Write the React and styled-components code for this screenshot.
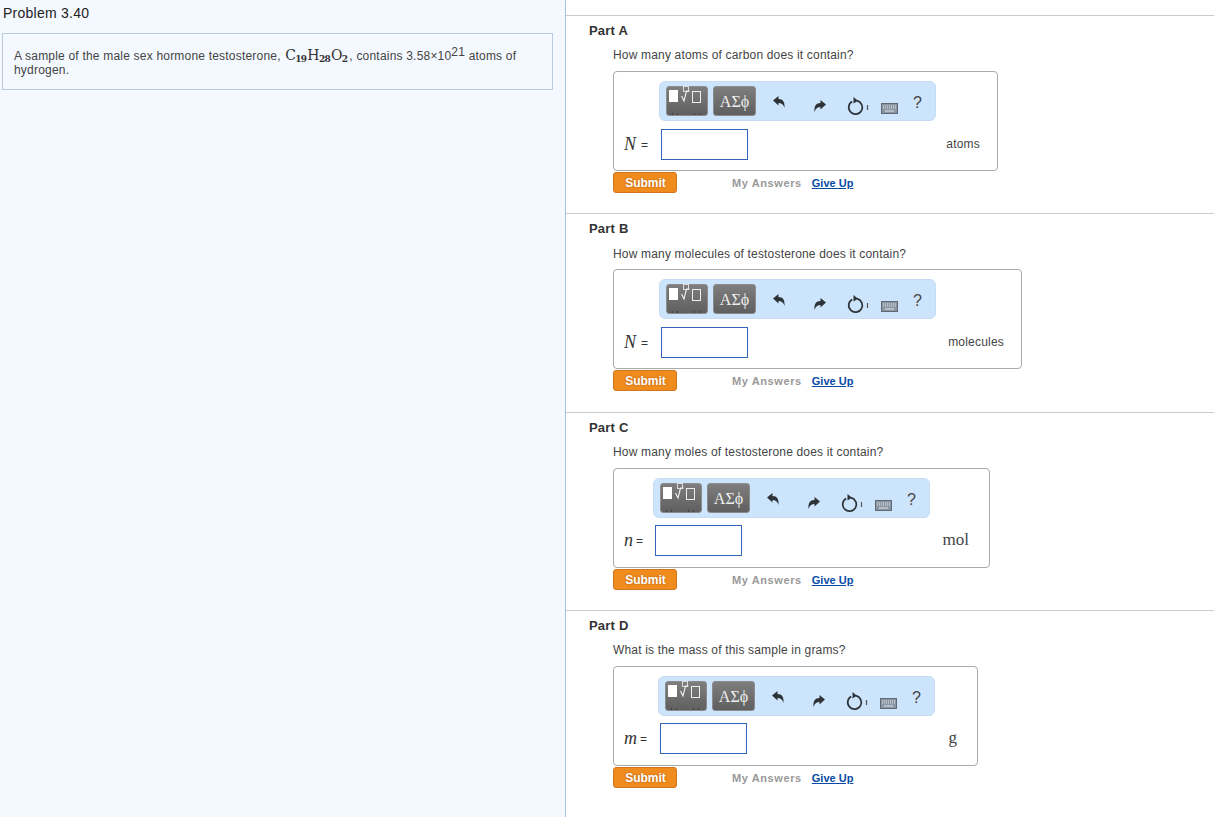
import React from "react";
import styled, { createGlobalStyle } from "styled-components";

const Global = createGlobalStyle`
  html, body { margin: 0; padding: 0; height: 817px; overflow: hidden; background: #fff; }
  body { font-family: "Liberation Sans", Arial, sans-serif; color: #333; }
`;
const Page = styled.div`display: flex; width: 1214px; height: 817px; overflow: hidden;`;
const Aside = styled.aside`
  width: 565px; flex: none; background: #f4f8ff; border-right: 1px solid #aac2de;
`;
const Title = styled.h1`
  margin: 0; padding: 5px 0 0 3px; height: 33px; box-sizing: border-box;
  font-size: 14px; line-height: 17px; font-weight: 400; color: #222; letter-spacing: 0.25px;
`;
const Statement = styled.div`
  margin-left: 2px; width: 551px; height: 57px; box-sizing: border-box;
  border: 1px solid #b9cbdd; padding: 14px 11px 0; font-size: 12px; line-height: 14px; color: #444;
  letter-spacing: 0.2px;
`;
const Chem = styled.span`
  font-family: "DejaVu Serif", "Liberation Serif", serif; font-size: 14px; color: #333;
  letter-spacing: -0.7px; margin: 0 1px;
  sub { font-size: 9px; font-weight: 700; vertical-align: -2px; line-height: 0; margin-right: 1px; }
`;
const Sup = styled.sup`font-size: 12px; line-height: 0; vertical-align: 4px;`;
const Main = styled.main`flex: 1; min-width: 0; padding-top: 15px;`;
const Section = styled.section`
  height: ${p => p.$h}px; box-sizing: border-box; border-top: 1px solid #ccc; padding: 7px 0 0 23px;
`;
const PartTitle = styled.h2`margin: 0; font-size: 13px; line-height: 15px; font-weight: 700; color: #333; letter-spacing: 0.2px;`;
const Question = styled.p`
  margin: 0 0 0 24px; padding-top: ${p => p.$pt}px; height: 24px; box-sizing: border-box;
  font-size: 12px; line-height: 15px; color: #444; letter-spacing: 0.175px;
`;
const AnswerBox = styled.div`
  margin: 9px 0 0 24px; box-sizing: border-box; width: ${p => p.$w}px; height: 100px;
  border: 1px solid #aaa; border-radius: 4px; padding: 9px ${p => p.$pr}px 0 0;
  background: #fff;
`;
const Toolbar = styled.div`
  display: flex; box-sizing: border-box; width: 277px; height: 40px; margin-left: ${p => p.$ml}px;
  padding: 4px 0 0 6px; background: #cde4fd; border: 1px solid #c6dcf3; border-radius: 6px;
`;
const MathButton = styled.div`
  position: relative; box-sizing: border-box; width: ${p => p.$w}px; height: 30px; margin-right: ${p => p.$mr}px;
  border: 1px solid #8c8c8c; border-radius: 3px;
  background: linear-gradient(#7e7e7e, #5f5f5f);
  color: #eee; font-family: "Liberation Serif", serif; font-size: 16px; line-height: 29px; text-align: center;
`;
const Tool = styled.svg`flex: none; margin: ${p => p.$mt}px 0 0 ${p => p.$ml}px; display: block; overflow: visible;`;
const Help = styled.span`margin: 7px 0 0 15px; font-size: 16px; line-height: 20px; color: #444;`;
const EntryRow = styled.div`display: flex; align-items: center; margin-top: ${p => p.$mt}px; height: 31px;`;
const Label = styled.label`
  display: flex; align-items: center; box-sizing: border-box; width: ${p => p.$w}px; padding-left: 10px;
  font-size: 12px; color: #333; flex: none;
  i { font-family: "Liberation Serif", serif; font-size: 18px; margin-right: ${p => p.$gap}px; }
`;
const Entry = styled.div`
  width: 87px; height: 31px; box-sizing: border-box; flex: none; background: #fff;
  border: 1px solid #3366bb;
`;
const Unit = styled.span`
  margin-left: auto; color: #444;
  font-size: ${p => p.$serif ? "17px" : "12px"};
  letter-spacing: ${p => p.$serif ? "0" : "0.2px"};
  margin-bottom: ${p => p.$serif ? "2px" : "2px"};
  font-family: ${p => p.$serif ? '"Liberation Serif", serif' : "inherit"};
`;
const Actions = styled.div`display: flex; align-items: center; margin: 1px 0 0 24px; height: 21px;`;
const Submit = styled.button`
  width: 64px; height: 21px; padding: 0 0 0 1px; box-sizing: border-box; border: 1px solid #d0771d; border-radius: 3px;
  background: #f08b1d; color: #fff; font: 700 12px "Liberation Sans", sans-serif; text-shadow: 0 0 2px #a85a10;
`;
const MyAnswers = styled.span`margin-left: 55px; font-size: 11px; font-weight: 700; color: #999; letter-spacing: 0.6px;`;
const GiveUp = styled.a`margin-left: 10px; font-size: 11px; font-weight: 700; color: #0a4ba5; text-decoration: underline;`;

const TemplateIcon = () => (
  <svg width="42" height="30" viewBox="0 0 42 30" style={{ position: "absolute", left: -1, top: -1, overflow: "visible" }}>
    <rect x="3" y="4" width="9" height="12" fill="#fff" />
    <rect x="17.500" y="0.500" width="5" height="5" fill="none" stroke="#ddd" />
    <path d="M15.500 10l2.500 5 2.500-10h3" fill="none" stroke="#f2f2f2" strokeWidth="1.100" />
    <rect x="26.500" y="5.500" width="8" height="11" fill="none" stroke="#eee" />
    <path d="M6 28h1M11 28h1M28 28h1M33 28h1" stroke="#222" />
  </svg>
);
const Undo = () => (
  <Tool $mt={10} $ml={13} width="12" height="12" viewBox="0 0 12 12">
    <path d="M0 4.500 5.500 0v3C10 3 12 6 11.500 12 10.500 8.500 8.500 7 5.500 7v2.500z" fill="#2e3338" />
  </Tool>
);
const Redo = () => (
  <Tool $mt={14} $ml={29} width="12" height="12" viewBox="0 0 12 12">
    <path d="M12 4.500 6.500 0v3C2 3 0 6 .5 12 1.500 8.500 3.500 7 6.500 7v2.500z" fill="#2e3338" />
  </Tool>
);
const Reset = () => (
  <Tool $mt={11} $ml={22} width="22" height="18" viewBox="0 0 22 18">
    <path d="M4.200 4.400A6.800 6.800 0 1 0 9 3.700" fill="none" stroke="#2e3338" strokeWidth="1.700" />
    <path d="M5.500 0 10 3.700 5.500 6.500z" fill="#2e3338" />
    <path d="M19.500 8v5" stroke="#555" strokeWidth="1.200" />
  </Tool>
);
const Keyboard = () => (
  <Tool $mt={17} $ml={11} width="17" height="11" viewBox="0 0 17 11">
    <rect x=".5" y=".5" width="16" height="10" fill="#8b96a3" stroke="#5f6873" />
    <path d="M2 3h13M2 5h13" stroke="#dfe4ea" strokeDasharray="1 1" />
    <path d="M4 8h9" stroke="#dfe4ea" />
  </Tool>
);

const parts = [
  { name: "Part A", q: "How many atoms of carbon does it contain?", qt: 10, w: 385, ml: 45, pr: 17, label: "N", gap: 5, lw: 47, unit: "atoms", h: 198, rowMt: 8 },
  { name: "Part B", q: "How many molecules of testosterone does it contain?", qt: 11, w: 409, ml: 45, pr: 17, label: "N", gap: 5, lw: 47, unit: "molecules", h: 199, rowMt: 8 },
  { name: "Part C", q: "How many moles of testosterone does it contain?", qt: 10, w: 377, ml: 39, pr: 20, label: "n", gap: 3, lw: 41, unit: "mol", serif: true, h: 198, rowMt: 7 },
  { name: "Part D", q: "What is the mass of this sample in grams?", qt: 10, w: 365, ml: 44, pr: 20, label: "m", gap: 3, lw: 46, unit: "g", serif: true, h: 207, rowMt: 7 },
];

export default function App() {
  return (
    <Page>
      <Global />
      <Aside>
        <Title>Problem 3.40</Title>
        <Statement>
          A sample of the male sex hormone testosterone, <Chem>C<sub>19</sub>H<sub>28</sub>O<sub>2</sub></Chem>, contains 3.58×10<Sup>21</Sup> atoms of hydrogen.
        </Statement>
      </Aside>
      <Main>
        {parts.map(p => (
          <Section key={p.name} $h={p.h}>
            <PartTitle>{p.name}</PartTitle>
            <Question $pt={p.qt}>{p.q}</Question>
            <AnswerBox $w={p.w} $pr={p.pr}>
              <Toolbar $ml={p.ml}>
                <MathButton $w={42} $mr={5}><TemplateIcon /></MathButton>
                <MathButton $w={43} $mr={4}>ΑΣϕ</MathButton>
                <Undo />
                <Redo />
                <Reset />
                <Keyboard />
                <Help>?</Help>
              </Toolbar>
              <EntryRow $mt={p.rowMt}>
                <Label $w={p.lw} $gap={p.gap}><i>{p.label}</i>=</Label>
                <Entry />
                <Unit $serif={p.serif}>{p.unit}</Unit>
              </EntryRow>
            </AnswerBox>
            <Actions>
              <Submit>Submit</Submit>
              <MyAnswers>My Answers</MyAnswers>
              <GiveUp href="#">Give Up</GiveUp>
            </Actions>
          </Section>
        ))}
      </Main>
    </Page>
  );
}
